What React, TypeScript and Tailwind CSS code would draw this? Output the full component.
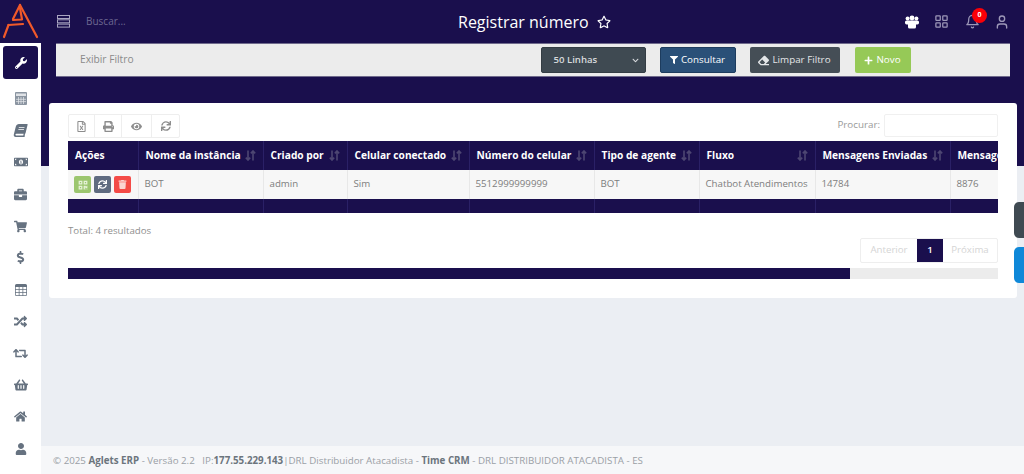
import React from 'react';
import {
  FaWrench, FaBook, FaMoneyBillAlt, FaBriefcase, FaShoppingCart, FaDollarSign,
  FaRandom, FaRetweet, FaShoppingBasket, FaHome, FaUser, FaRegStar, FaFilter, FaEraser, FaPlus,
  FaPrint, FaEye, FaSync, FaQrcode, FaTrash, FaRegFileExcel, FaChevronDown,
} from 'react-icons/fa';
import { BsTable } from 'react-icons/bs';
import { LuLayoutGrid, LuBell, LuUser } from 'react-icons/lu';

const CalculatorIcon = () => (
  <svg width="12" height="13" viewBox="0 0 12 13" fill="#8b95a1">
    <rect x="0" y="0" width="12" height="13" rx="1" />
    <path d="M1 1.5h10v2.5H1z" fill="#dfe2e6" />
    <path d="M3.5 5v7M6 5v7M8.5 5v7M1 7.3h10M1 9.6h10" stroke="#e8eaed" strokeWidth="0.7" />
  </svg>
);

const SlantedBook = () => <FaBook size={13} className="-skew-x-[14deg]" />;

const NAV_ITEMS = [
  <CalculatorIcon />, <SlantedBook />, <FaMoneyBillAlt size={14} />, <FaBriefcase size={13} />, <FaShoppingCart size={13} />,
  <FaDollarSign size={13} />, <BsTable size={12} />, <FaRandom size={13} />, <FaRetweet size={15} />, <FaShoppingBasket size={14} />,
  <FaHome size={13} />, <FaUser size={12} />,
];

const COLUMNS = [
  { title: 'Ações', width: 70, sort: false, value: '' },
  { title: 'Nome da instância', width: 125, sort: true, value: 'BOT' },
  { title: 'Criado por', width: 84, sort: true, value: 'admin' },
  { title: 'Celular conectado', width: 122, sort: true, value: 'Sim' },
  { title: 'Número do celular', width: 125, sort: true, value: '5512999999999' },
  { title: 'Tipo de agente', width: 105, sort: true, value: 'BOT' },
  { title: 'Fluxo', width: 116, sort: true, value: 'Chatbot Atendimentos' },
  { title: 'Mensagens Enviadas', width: 135, sort: true, value: '14784' },
  { title: 'Mensagens Recebidas', width: 135, sort: false, value: '8876' },
];

const Logo = () => (
  <svg width="41" height="43" viewBox="0 0 41 43" fill="none" stroke="#f0592a" strokeWidth="2.2" strokeLinecap="round" strokeLinejoin="round">
    <path d="M20 5 L37 37" />
    <path d="M20 5 L13 19" />
    <path d="M20 8 L22 19.5 L13 20" />
    <path d="M8.5 25 L23 24" />
    <path d="M8.5 25 L4 37" />
  </svg>
);

const TeamIcon = () => (
  <svg width="14" height="14" viewBox="0 0 14 14" fill="#ffffff" className="mr-[15px]">
    <circle cx="2.6" cy="3.4" r="2" />
    <circle cx="11.4" cy="3.4" r="2" />
    <circle cx="7" cy="3" r="2.4" />
    <rect x="0" y="5.4" width="14" height="4" rx="1.6" />
    <rect x="3" y="7" width="8" height="6.5" rx="1.6" />
  </svg>
);

const SortIcon = () => (
  <svg width="11" height="11" viewBox="0 0 11 11" fill="none" stroke="#4d4672" strokeWidth="1.6" className="ml-auto shrink-0">
    <path d="M3 0.5V10M0.8 7.6L3 10L5.2 7.6" />
    <path d="M8 10.5V1M5.8 3.4L8 1L10.2 3.4" />
  </svg>
);

const App: React.FC = () => {
  return (
    <div className="h-[474px] w-[1024px] overflow-hidden flex flex-col text-[#6c757d] font-['Open_Sans',sans-serif]">
      {/* Topbar */}
      <header className="h-[43px] shrink-0 bg-[#1a0f4d] flex items-center relative">
        <div className="w-[41px] h-[43px]"><Logo /></div>
        <svg width="14" height="13" viewBox="0 0 14 13" fill="none" stroke="#a9a5c0" strokeWidth="1" className="ml-[16px]">
          <rect x="0.5" y="0.5" width="12" height="3" />
          <rect x="0.5" y="4.8" width="12" height="3" />
          <rect x="0.5" y="9.1" width="12" height="3" />
        </svg>
        <span className="ml-[15px] text-[10px] text-[#6d6891]">Buscar...</span>
        <div className="absolute left-[458px] top-0 h-full flex items-center gap-[8px] text-white">
          <span className="text-[16px]">Registrar número</span>
          <FaRegStar size={14} />
        </div>
        <div className="ml-auto flex items-center text-[#9d98b8]">
          <TeamIcon />
          <LuLayoutGrid size={15} className="mr-[16px]" />
          <div className="relative mr-[14px]">
            <LuBell size={15} />
            <span className="absolute -top-[6px] left-[7px] w-[15px] h-[15px] rounded-full bg-[#fb0007] text-white text-[7px] font-bold flex items-center justify-center">0</span>
          </div>
          <LuUser size={16} className="mr-[14px]" />
        </div>
      </header>

      <div className="flex-1 flex min-h-0">
        {/* Sidebar */}
        <aside className="w-[41px] shrink-0 bg-white flex flex-col items-center pt-[3px]">
          <div className="w-[35px] h-[33px] bg-[#1a0f4d] rounded-[3px] flex items-center justify-center text-white mb-[4px]">
            <FaWrench size={12} />
          </div>
          {NAV_ITEMS.map((icon, i) => (
            <div key={i} className="h-[31.8px] flex items-center justify-center text-[#667280] shrink-0">
              {icon}
            </div>
          ))}
        </aside>

        {/* Main */}
        <main className="flex-1 flex flex-col min-w-0 relative bg-[linear-gradient(#1a0f4d_123px,#ebeef3_123px)]">
          <div className="ml-[15px] w-[954px] h-[34px] bg-[#ececec] border-t border-b border-[#6f6a8c] rounded-[1px] flex items-center shrink-0">
            <span className="ml-[24px] text-[#8a8a8a] text-[10.2px] -mt-[1px]">Exibir Filtro</span>
            <div className="ml-[407px] w-[105px] h-[26px] bg-[#3f4a52] border border-[#343d44] rounded-[2px] flex items-center pl-[12px] pr-[6px] text-[#d7dadd] text-[9.6px] font-semibold">
              50 Linhas
              <FaChevronDown size={7} className="ml-auto" />
            </div>
            <div className="ml-[14px] w-[76px] h-[26px] bg-[#2a5078] border border-[#1d3c5e] rounded-[2px] flex items-center justify-center gap-[3px] text-white text-[9.8px]">
              <FaFilter size={8} />Consultar
            </div>
            <div className="ml-[14px] w-[90px] h-[26px] bg-[#454e56] rounded-[2px] flex items-center justify-center gap-[3px] text-[#e4e6e8] text-[9.8px]">
              <FaEraser size={11} />Limpar Filtro
            </div>
            <div className="ml-[15px] w-[56px] h-[26px] bg-[#96c957] rounded-[2px] flex items-center justify-center gap-[3px] text-white text-[9.8px]">
              <FaPlus size={9} />Novo
            </div>
          </div>

          {/* Card */}
          <section className="ml-[8px] mt-[26px] w-[968px] h-[195px] bg-white rounded-[3px] pt-[11px] px-[19px] shrink-0">
            <div className="flex items-start h-[27px]">
              <div className="flex h-[24px] border border-[#eeeeee] rounded-[2px] text-[#8d8d8d]">
                <div className="w-[26px] flex items-center justify-center border-r border-[#eeeeee]"><FaRegFileExcel size={11} /></div>
                <div className="w-[27px] flex items-center justify-center border-r border-[#eeeeee]"><FaPrint size={11} /></div>
                <div className="w-[30px] flex items-center justify-center border-r border-[#eeeeee]"><FaEye size={11} /></div>
                <div className="w-[27px] flex items-center justify-center"><FaSync size={10} /></div>
              </div>
              <span className="ml-auto text-[9.8px] text-[#9a9a9a] mt-[4px]">Procurar:</span>
              <div className="ml-[4px] w-[114px] h-[23px] border border-[#f0f0f0] rounded-[2px]" />
            </div>

            <div className="w-[930px] overflow-hidden">
              <table className="table-fixed border-collapse w-[1017px]">
                <colgroup>
                  {COLUMNS.map((c) => <col key={c.title} style={{ width: c.width }} />)}
                </colgroup>
                <thead>
                  <tr className="bg-[#1a0f4d] text-white h-[29px] text-[10.2px]">
                    {COLUMNS.map((c) => (
                      <th key={c.title} className="border-r border-[#2a2066] px-[7px] text-left font-bold whitespace-nowrap">
                        <div className="flex items-center">{c.title}{c.sort && <SortIcon />}</div>
                      </th>
                    ))}
                  </tr>
                </thead>
                <tbody>
                  <tr className="bg-[#f7f7f7] h-[29px] text-[#7d7d7d] text-[9.7px]">
                    <td className="border-r border-[#e8e8e8] px-[6px]">
                      <div className="flex gap-[3px]">
                        <span className="w-[17px] h-[17px] rounded-[2px] bg-[#9cc66f] text-[#e6f2d8] flex items-center justify-center"><FaQrcode size={10} /></span>
                        <span className="w-[17px] h-[17px] rounded-[2px] bg-[#5f6b80] text-white flex items-center justify-center"><FaSync size={9} /></span>
                        <span className="w-[17px] h-[17px] rounded-[2px] bg-[#f44b47] text-[#fbd5d3] flex items-center justify-center"><FaTrash size={9} /></span>
                      </div>
                    </td>
                    {COLUMNS.slice(1).map((c) => (
                      <td key={c.title} className="border-r border-[#e8e8e8] px-[6px] pb-[1px] whitespace-nowrap">{c.value}</td>
                    ))}
                  </tr>
                  <tr className="bg-[#1a0f4d] h-[14px]">
                    {COLUMNS.map((c) => <td key={c.title} className="border-r border-[#2a2066]" />)}
                  </tr>
                </tbody>
              </table>
            </div>

            <div className="flex justify-between h-[55px]">
              <span className="text-[9.7px] text-[#8f8f8f] mt-[11px]">Total: 4 resultados</span>
              <div className="mt-[25px] h-[25px] flex border border-[#eeeeee] rounded-[2px] text-[9.7px] text-[#d5d5d5]">
                <span className="w-[56px] flex items-center justify-center">Anterior</span>
                <span className="w-[26px] flex items-center justify-center bg-[#1a0f4d] text-white font-semibold">1</span>
                <span className="w-[54px] flex items-center justify-center">Próxima</span>
              </div>
            </div>

            <div className="w-[930px] h-[11px] bg-[#ececec]">
              <div className="w-[782px] h-full bg-[#1a0f4d]" />
            </div>
          </section>

          {/* Floating side tabs */}
          <div className="absolute right-0 top-[159px] w-[10px] h-[36px] bg-[#3f4a52] rounded-l-[5px]" />
          <div className="absolute right-0 top-[204px] w-[10px] h-[36px] bg-[#0f88d8] rounded-l-[5px]" />

          <footer className="mt-auto h-[28px] bg-[#f6f7f9] flex items-center pl-[12px] pt-[3px] text-[9.75px] text-[#9aa0a6] whitespace-nowrap">
            <span>© 2025 <b className="text-[#6c757d]">Aglets ERP</b> - Versão 2.2 &nbsp; IP:<b className="text-[#6c757d]">177.55.229.143</b>|DRL Distribuidor Atacadista - <b className="text-[#6c757d]">Time CRM</b> - DRL DISTRIBUIDOR ATACADISTA - ES</span>
          </footer>
        </main>
      </div>
    </div>
  );
};

export default App;
